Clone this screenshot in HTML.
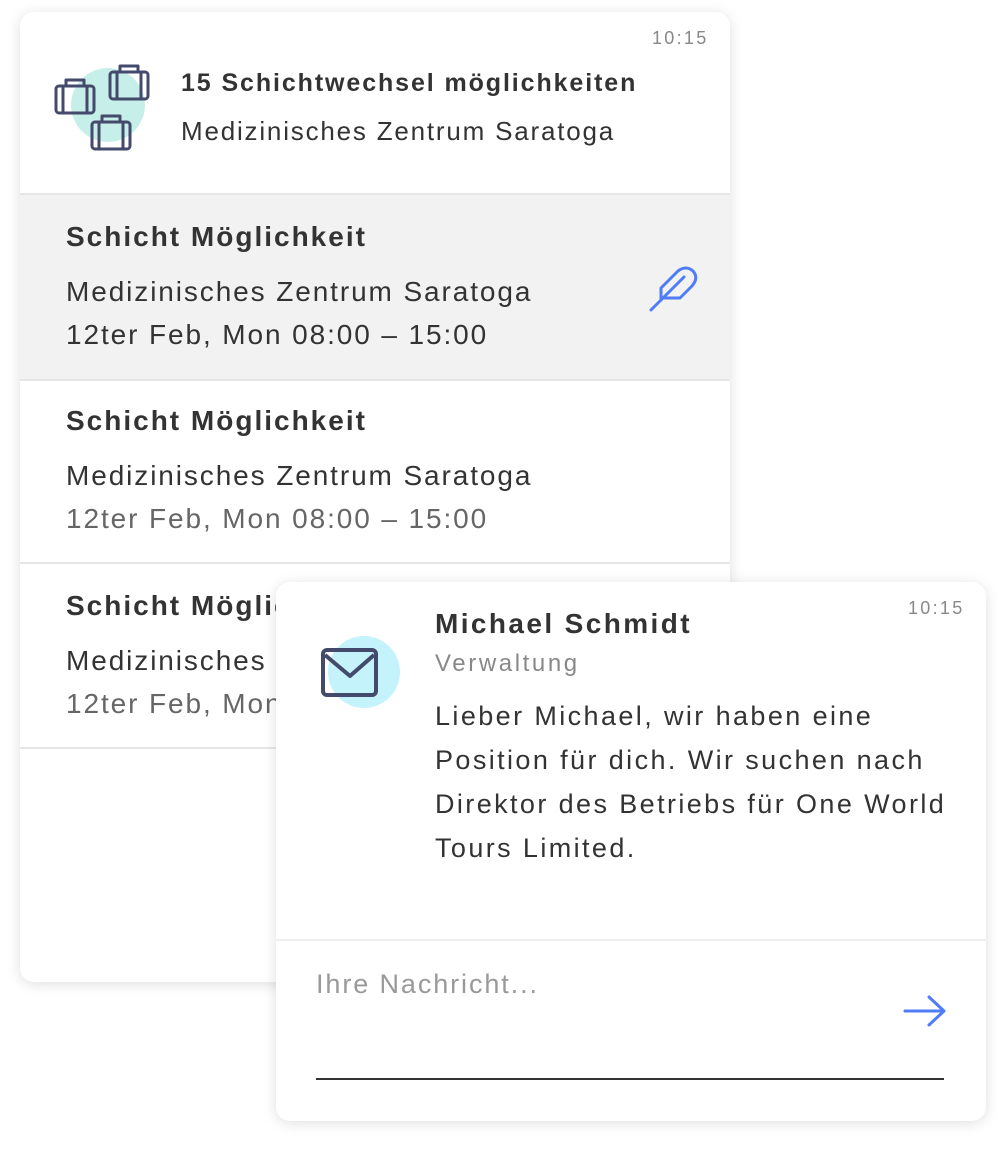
<!DOCTYPE html>
<html><head><meta charset="utf-8"><style>
body{margin:0;width:1006px;height:1150px;background:#fff;font-family:"Liberation Sans",sans-serif;position:relative;overflow:hidden;color:#333}
.card{position:absolute;background:#fff;border-radius:14px;box-shadow:0 2px 14px rgba(0,0,0,.13);overflow:hidden}
.t{position:absolute;white-space:nowrap}
.time{font-size:18px;color:#888;letter-spacing:2.3px}
.row{position:absolute;left:0;width:710px;border-bottom:2px solid #e6e6e6}
.h{font-size:28px;font-weight:bold;color:#333;letter-spacing:2px}
.b{font-size:28px;color:#333;letter-spacing:1.9px}
.g{font-size:28px;color:#666;letter-spacing:1.9px}
</style></head><body>
<div class="card" style="left:20px;top:12px;width:710px;height:970px">
<div class="t time" style="left:632px;top:16px">10:15</div>
<svg style="position:absolute;left:30px;top:48px" width="110" height="95" viewBox="30 48 110 95">
<circle cx="88" cy="93" r="37" fill="#c7efe9"/>
<g fill="none" stroke="#444a6b" stroke-width="3" stroke-linejoin="round">
<rect x="36" y="74" width="38" height="27" rx="3"/><path d="M46 74v-6h18v6M43 74v27M67 74v27"/>
<rect x="90" y="60" width="38" height="27" rx="3"/><path d="M100 60v-6h18v6M97 60v27M121 60v27"/>
<rect x="72" y="110" width="38" height="27" rx="3"/><path d="M82 110v-6h18v6M79 110v27M103 110v27"/>
</g></svg>
<div class="t" style="left:161px;top:57px;font-size:25px;font-weight:bold;letter-spacing:1.9px">15 Schichtwechsel möglichkeiten</div>
<div class="t" style="left:161px;top:104px;font-size:26px;letter-spacing:1.8px">Medizinisches Zentrum Saratoga</div>
<div class="row" style="top:181px;height:184px;background:#f2f2f2;border-top:2px solid #e6e6e6">
<div class="t h" style="left:46px;top:26px">Schicht Möglichkeit</div>
<div class="t b" style="left:46px;top:81px">Medizinisches Zentrum Saratoga</div>
<div class="t b" style="left:46px;top:124px">12ter Feb, Mon 08:00 – 15:00</div>
<svg style="position:absolute;left:628px;top:68px" width="52" height="52" viewBox="0 0 52 52" fill="none" stroke="#4f7cf7" stroke-width="3" stroke-linecap="round" stroke-linejoin="round">
<path d="M3 47L13 37M13 37V25L30 8Q38 2 45 8Q51 15 44 23L32 35H13M13 37L36 14"/></svg>
</div>
<div class="row" style="top:367px;height:183px">
<div class="t h" style="left:46px;top:26px">Schicht Möglichkeit</div>
<div class="t b" style="left:46px;top:81px">Medizinisches Zentrum Saratoga</div>
<div class="t g" style="left:46px;top:124px">12ter Feb, Mon 08:00 – 15:00</div>
</div>
<div class="row" style="top:552px;height:183px">
<div class="t h" style="left:46px;top:26px">Schicht Möglichkeit</div>
<div class="t b" style="left:46px;top:81px">Medizinisches Zentrum Saratoga</div>
<div class="t g" style="left:46px;top:124px">12ter Feb, Mon 08:00 – 15:00</div>
</div>
</div>
<div class="card" style="left:276px;top:582px;width:710px;height:539px">
<div class="t time" style="left:632px;top:16px">10:15</div>
<svg style="position:absolute;left:40px;top:50px" width="90" height="80" viewBox="316 632 90 80">
<circle cx="364" cy="672" r="36" fill="#c4f3fb"/>
<rect x="323" y="650" width="53" height="45" rx="4" fill="none" stroke="#444a6b" stroke-width="4"/>
<path d="M325 655L350 676L374 655" fill="none" stroke="#444a6b" stroke-width="4" stroke-linejoin="round"/></svg>
<div class="t" style="left:159px;top:26px;font-size:28px;font-weight:bold;letter-spacing:2.4px">Michael Schmidt</div>
<div class="t" style="left:159px;top:68px;font-size:24px;color:#888;letter-spacing:2.6px">Verwaltung</div>
<div style="position:absolute;left:159px;top:112px;width:540px;font-size:27px;line-height:44px;color:#333;letter-spacing:2.4px;white-space:nowrap">Lieber Michael, wir haben eine<br>Position für dich. Wir suchen nach<br>Direktor des Betriebs für One World<br>Tours Limited.</div>
<div style="position:absolute;left:0;top:357px;width:710px;border-top:2px solid #eee"></div>
<div class="t" style="left:40px;top:387px;font-size:27px;color:#999;letter-spacing:1.9px">Ihre Nachricht...</div>
<svg style="position:absolute;left:626px;top:412px" width="46" height="34" viewBox="0 0 46 34" fill="none" stroke="#4f7cf7" stroke-width="3" stroke-linecap="round" stroke-linejoin="round"><path d="M3 17H42M27 3L42 17L27 31"/></svg>
<div style="position:absolute;left:40px;top:496px;width:628px;border-top:2px solid #333"></div>
</div>
</body></html>
